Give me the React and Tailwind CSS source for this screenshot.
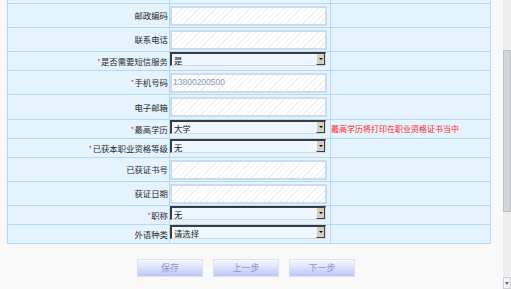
import React from 'react';

const ROWS = [
  { label: '邮政编码', type: 'input', h: 'h-[24px]' },
  { label: '联系电话', type: 'input', h: 'h-[24px]' },
  { label: '是否需要短信服务', type: 'select', value: '是', required: true, h: 'h-[19px]' },
  { label: '手机号码', type: 'input', value: '13800200500', required: true, h: 'h-[24px]' },
  { label: '电子邮箱', type: 'input', h: 'h-[25px]' },
  { label: '最高学历', type: 'select', value: '大学', required: true, h: 'h-[19px]', note: '最高学历将打印在职业资格证书当中' },
  { label: '已获本职业资格等级', type: 'select', value: '无', required: true, h: 'h-[19px]' },
  { label: '已获证书号', type: 'input', h: 'h-[24px]' },
  { label: '获证日期', type: 'input', h: 'h-[24px]' },
  { label: '职称', type: 'select', value: '无', required: true, h: 'h-[19px]' },
  { label: '外语种类', type: 'select', value: '请选择', h: 'h-[19px]' }
];

const BUTTONS = ['保存', '上一步', '下一步'];

function TextBox({ value }) {
  return (
    <div className="w-[157px] h-[20px] border-2 border-[#cbdcee] bg-[repeating-linear-gradient(135deg,#ffffff_0px,#ffffff_3px,#eef0f3_3px,#eef0f3_4px)] flex items-center pl-[1px]">
      {value && <span className="text-[8.5px] text-[#8a9bb3] font-['Liberation_Sans',sans-serif]">{value}</span>}
    </div>
  );
}

function SelectBox({ value }) {
  return (
    <div className="w-[156px] h-[14px] flex border-t-2 border-l-2 border-[#3c3c3c] border-b border-r border-b-[#d8d8d8] border-r-[#d8d8d8] bg-[#eef6ff]">
      <span className="flex-1 pl-[2px] text-[8.4px] leading-[12px] text-[#222]">{value}</span>
      <span className="w-[9px] h-full bg-[#d4d0c8] border-r border-b border-[#404040] border-l border-l-[#f4f4f4] flex items-center justify-center">
        <span className="w-0 h-0 border-l-[2px] border-r-[2px] border-t-[2px] border-l-transparent border-r-transparent border-t-black" />
      </span>
    </div>
  );
}

export default function App() {
  return (
    <div className="flex h-[289px] w-[511px] overflow-hidden bg-[#f9f9f9] font-['Noto_Sans_CJK_SC','Liberation_Sans',sans-serif]">
      <div className="w-[503px] shrink-0">
        <div className="ml-[7px] w-[484px] border-l border-[#b3d9f5]">
          {/* cut-off row above */}
          <div className="grid grid-cols-[162px_161px_160px] h-[4px] border-b border-[#b3d9f5] bg-[#e5f3ff]">
            <div className="border-r border-[#b3d9f5]" />
            <div className="border-r border-[#b3d9f5]" />
            <div className="border-r border-[#b3d9f5]" />
          </div>

          {ROWS.map(row => (
            <div key={row.label} className={`grid grid-cols-[162px_161px_160px] border-b border-[#b3d9f5] bg-[#e5f3ff] ${row.h}`}>
              <div className="border-r border-[#b3d9f5] flex items-center justify-end pr-[1px] text-[8.4px] text-[#2a2a2a]">
                {row.required && <span className="text-[#e02020] text-[7px] mr-[0.5px]">*</span>}
                {row.label}
              </div>
              <div className={`border-r border-[#b3d9f5] flex ${row.type === 'input' ? 'items-center' : 'items-start'}`}>
                {row.type === 'input' ? <TextBox value={row.value} /> : <SelectBox value={row.value} />}
              </div>
              <div className="border-r border-[#b3d9f5] flex items-center">
                {row.note && <span className="text-[8px] text-[#ff1a1a]">{row.note}</span>}
              </div>
            </div>
          ))}
        </div>

        {/* Action buttons */}
        <div className="flex gap-[10px] ml-[137px] mt-[15px]">
          {BUTTONS.map(label => (
            <button
              key={label}
              className="w-[66px] h-[18px] border border-[#dbe2f0] bg-linear-to-b from-[#f8f9ff] to-[#bdc6f7] text-[9px] text-[#8796d6] flex items-center justify-center"
            >
              {label}
            </button>
          ))}
        </div>
      </div>

      {/* Scrollbar */}
      <div className="w-[8px] h-full bg-[#eeeeee] flex flex-col">
        <div className="h-[50px]" />
        <div className="h-[162px] bg-[#d3d6d9] border border-[#bfc3c7]" />
        <div className="flex-1" />
        <div className="h-[12px] bg-[#f4f4f4] border border-[#d0d0d0] flex items-center justify-center">
          <span className="w-0 h-0 border-l-[2px] border-r-[2px] border-t-[3px] border-l-transparent border-r-transparent border-t-[#3a78b8]" />
        </div>
      </div>
    </div>
  );
}
